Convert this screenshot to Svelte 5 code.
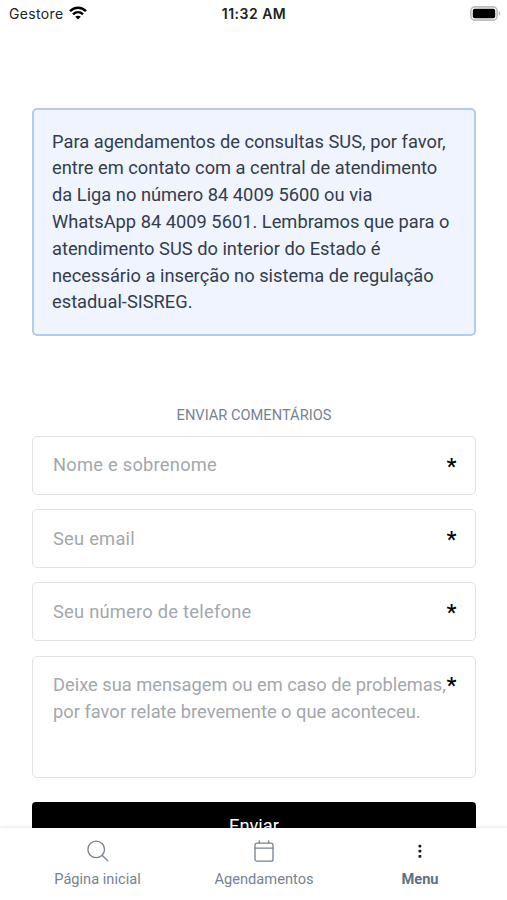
<script lang="ts">
  let fields = [
    { name: 'name', type: 'text', placeholder: 'Nome e sobrenome' },
    { name: 'email', type: 'email', placeholder: 'Seu email' },
    { name: 'phone', type: 'tel', placeholder: 'Seu número de telefone' }
  ]
  let values = { name: '', email: '', phone: '' }
  let message = ''
</script>

<div class="screen">
  <header class="status">
    <div class="carrier">
      <span>Gestore</span>
      <svg width="18" height="14" viewBox="0 0 18 14">
        <path d="M1 5.2 C5.5 0.6 12.5 0.6 17 5.2" fill="none" stroke="#000" stroke-width="2.5" />
        <path d="M4 8.3 C7 5.5 11 5.5 14 8.3" fill="none" stroke="#000" stroke-width="2.3" />
        <path d="M9 13.6 L6.2 10.8 C7.8 9.4 10.2 9.4 11.8 10.8 Z" fill="#000" />
      </svg>
    </div>
    <span class="time">11:32 AM</span>
    <svg class="battery" width="31" height="15" viewBox="0 0 31 15">
      <rect x="0.9" y="0.9" width="26.2" height="13.2" rx="4" fill="#fff" stroke="#bcbcbc" stroke-width="1.6" />
      <rect x="2.8" y="2.8" width="22.4" height="9.4" rx="2" fill="#000" />
      <path d="M28.6 5 C30.8 5.6 30.8 9.2 28.6 9.8 Z" fill="#bcbcbc" />
    </svg>
  </header>

  <main>
    <p class="notice">
      Para agendamentos de consultas SUS, por favor,<br />
      entre em contato com a central de atendimento<br />
      da Liga no número 84 4009 5600 ou via<br />
      WhatsApp 84 4009 5601. Lembramos que para o<br />
      atendimento SUS do interior do Estado é<br />
      necessário a inserção no sistema de regulação<br />
      estadual-SISREG.
    </p>

    <form>
      <h2>ENVIAR COMENTÁRIOS</h2>
      {#each fields as field}
        <div class="field">
          <input type={field.type} placeholder={field.placeholder} bind:value={values[field.name]}>
          <span class="required">*</span>
        </div>
      {/each}
      <div class="field message">
        <textarea bind:value={message} placeholder={'Deixe sua mensagem ou em caso de problemas,\npor favor relate brevemente o que aconteceu.'}></textarea>
        <span class="required">*</span>
      </div>
      <button type="button">Enviar</button>
    </form>
  </main>

  <nav>
    <div class="tab">
      <svg width="22" height="22" viewBox="0 0 22 22" fill="none" stroke="#78828f" stroke-width="1.3" stroke-linecap="round">
        <circle cx="9.2" cy="9.4" r="8.3" />
        <path d="M15.1 15.3 L20.8 20.8" />
      </svg>
      <span>Página inicial</span>
    </div>
    <div class="tab">
      <svg width="22" height="22" viewBox="0 0 22 22" fill="none" stroke="#78828f" stroke-width="1.3" stroke-linecap="round">
        <rect x="2" y="3.2" width="18" height="18" rx="2" />
        <path d="M2 8.2 H20 M6.3 0.8 V3.2 M15.7 0.8 V3.2" />
      </svg>
      <span>Agendamentos</span>
    </div>
    <div class="tab active">
      <svg width="22" height="22" viewBox="0 0 22 22" fill="#1a1a1a">
        <rect x="9.5" y="4.7" width="2.8" height="2.8" rx="0.8" />
        <rect x="9.5" y="9.8" width="2.8" height="2.8" rx="0.8" />
        <rect x="9.5" y="14.9" width="2.8" height="2.8" rx="0.8" />
      </svg>
      <span>Menu</span>
    </div>
  </nav>
</div>

<style>
  :global(body)
  {
    background: #fff;
    overflow: hidden;
  }
  .screen
  {
    height: 900px;
    display: flex;
    flex-direction: column;
    font-family: Roboto, sans-serif;
    overflow: hidden;
  }
  .status
  {
    flex: none;
    height: 27px;
    display: grid;
    grid-template-columns: 1fr auto 1fr;
    align-items: center;
    padding: 0 6px 0 9px;
    font-family: Inter, sans-serif;
    font-size: 14px;
    color: #222;
  }
  .carrier
  {
    display: flex;
    align-items: center;
    gap: 5px;
    letter-spacing: 0.35px;
  }
  .carrier svg
  {
    position: relative;
    top: -1px;
  }
  .time
  {
    font-weight: 600;
    letter-spacing: 0.5px;
    margin-right: 2px;
  }
  .battery
  {
    justify-self: end;
  }
  main
  {
    flex: 1;
    min-height: 0;
    overflow: hidden;
    padding: 81px 31px 0 32px;
  }
  .notice
  {
    box-sizing: border-box;
    height: 228px;
    margin: 0 0 70px;
    padding: 18.6px 18px 0;
    border: 2px solid #b3cceb;
    border-radius: 5px;
    background: #eff4fe;
    font-size: 18.3px;
    line-height: 26.8px;
    color: #333d4b;
    white-space: nowrap;
  }
  form
  {
    display: flex;
    flex-direction: column;
  }
  h2
  {
    margin: 0 0 11.6px;
    font-size: 14.65px;
    font-weight: 400;
    line-height: 18px;
    text-align: center;
    color: #78828f;
  }
  .field
  {
    box-sizing: border-box;
    position: relative;
    height: 59px;
    margin-bottom: 14.4px;
    border: 1.5px solid #e2e2e2;
    border-radius: 5px;
    display: flex;
  }
  .message
  {
    height: 122px;
    margin-bottom: 24px;
  }
  input, textarea
  {
    flex: 1;
    min-width: 0;
    margin: 0;
    padding: 0 0 0 20px;
    border: none;
    outline: none;
    resize: none;
    overflow: hidden;
    background: transparent;
    font-family: inherit;
    font-size: 18.3px;
    line-height: 26.8px;
  }
  input
  {
    padding-top: 1px;
    letter-spacing: 0.25px;
  }
  textarea
  {
    padding-top: 15.4px;
    white-space: pre;
  }
  input::placeholder, textarea::placeholder
  {
    color: #a3a7ac;
    opacity: 1;
  }
  .required
  {
    position: absolute;
    top: 16px;
    right: 18.5px;
    font-size: 22.5px;
    font-weight: 500;
    line-height: 26px;
    color: #000;
  }
  .message .required
  {
    top: 15px;
  }
  button
  {
    height: 48px;
    border: none;
    border-radius: 4px;
    background: #000;
    color: #fff;
    font-family: inherit;
    font-size: 18.3px;
  }
  nav
  {
    flex: none;
    height: 72px;
    box-sizing: border-box;
    display: grid;
    grid-template-columns: 195px 138px 174px;
    position: relative;
    background: #fff;
    box-shadow: 0 -1px 3px rgba(0, 0, 0, 0.1);
  }
  .tab
  {
    display: flex;
    flex-direction: column;
    align-items: center;
    padding-top: 12px;
    gap: 8px;
    font-size: 14.65px;
    line-height: 19px;
    color: #78828f;
  }
  .active
  {
    font-weight: 700;
    color: #617082;
  }
</style>
